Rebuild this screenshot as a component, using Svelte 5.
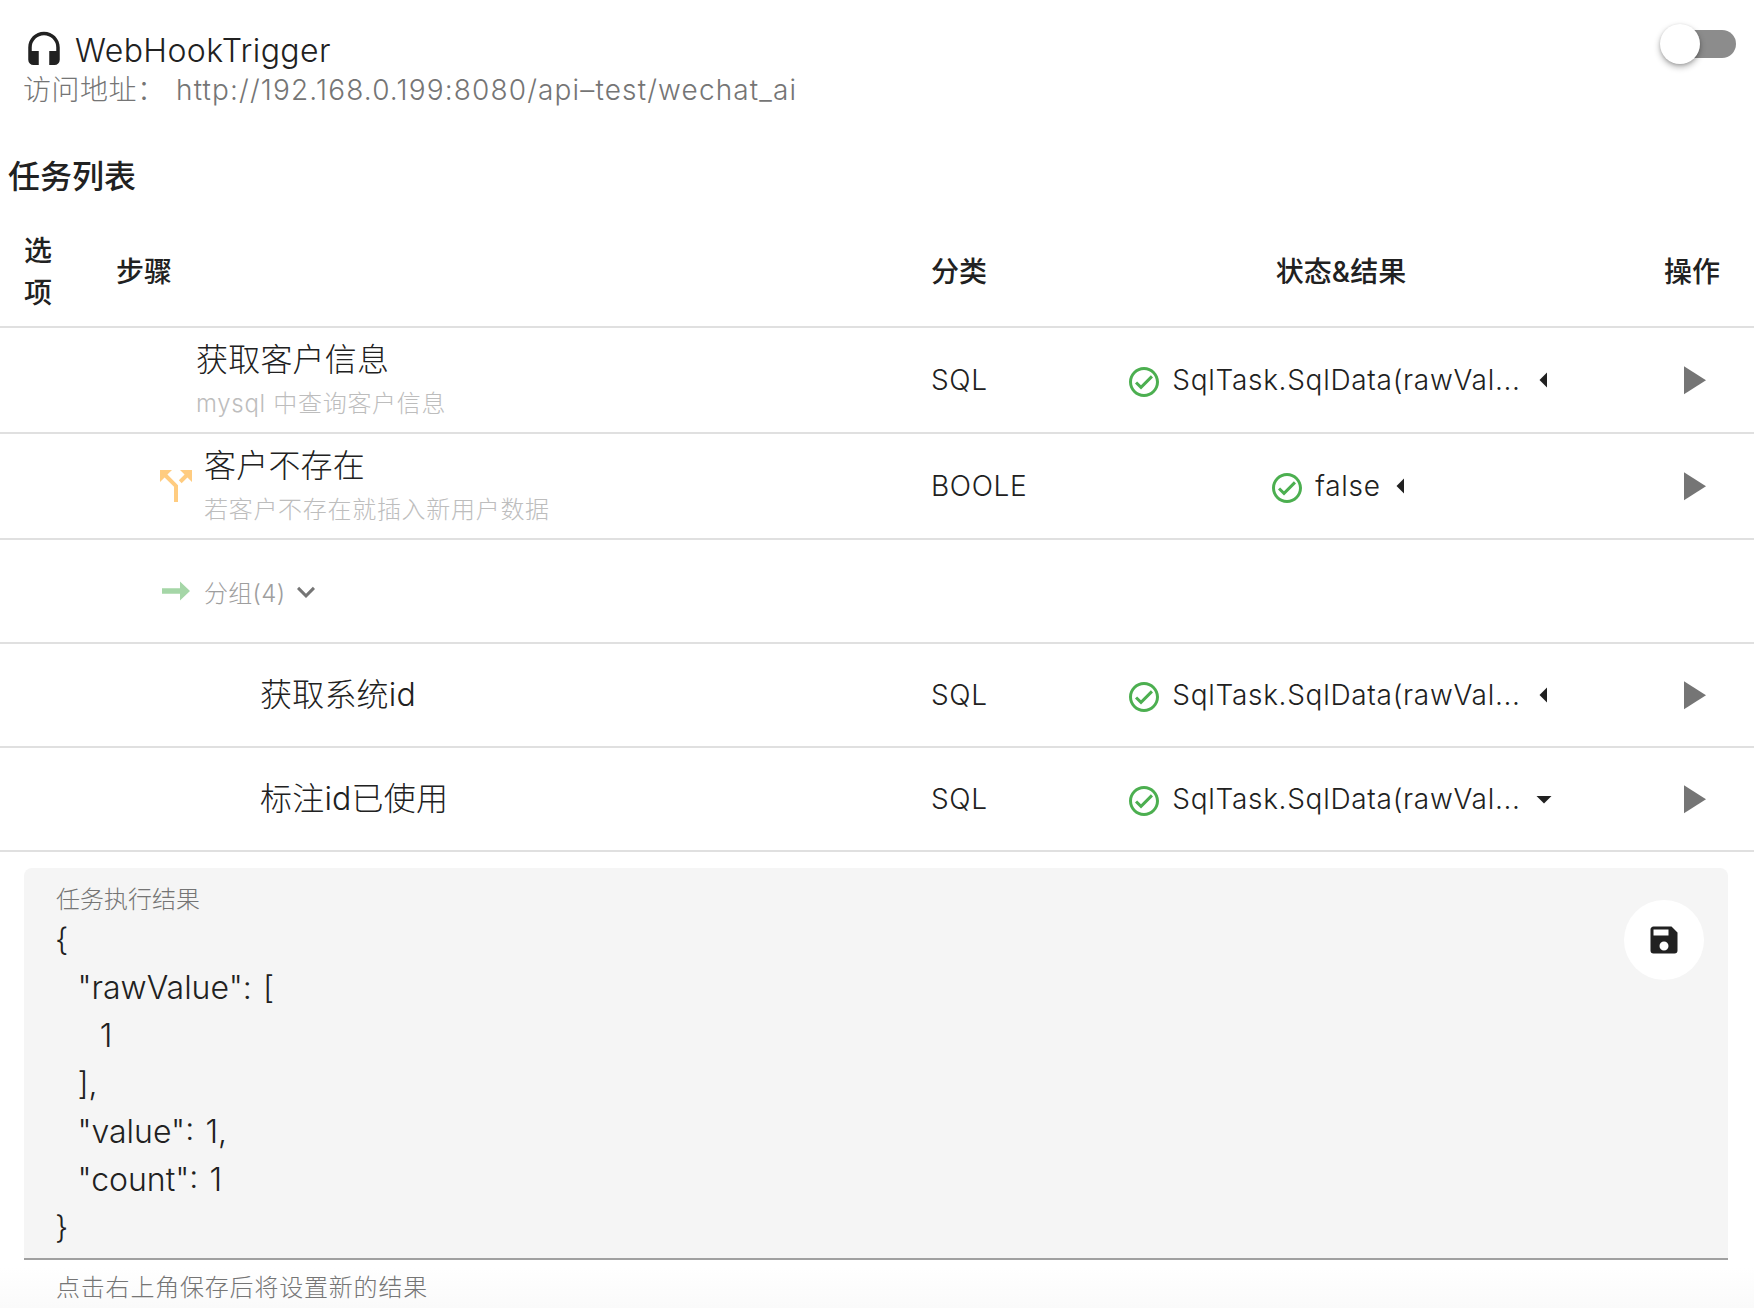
<script>
	const icons = {
		headphones: 'M12,1C7,1 3,5 3,10V17A3,3 0 0,0 6,20H9V12H5V10A7,7 0 0,1 12,3A7,7 0 0,1 19,10V12H15V20H18A3,3 0 0,0 21,17V10C21,5 17,1 12,1Z',
		split: 'M14,4L16.29,6.29L13.41,9.17L14.83,10.59L17.71,7.71L20,10V4M10,4H4V10L6.29,7.71L11,12.41V20H13V11.59L7.71,6.29',
		arrow: 'M1.5,10H15V4.9L22.5,12L15,19.1V14H1.5Z',
		check: 'M12 2C6.5 2 2 6.5 2 12S6.5 22 12 22 22 17.5 22 12 17.5 2 12 2M12 20C7.59 20 4 16.41 4 12S7.59 4 12 4 20 7.59 20 12 16.41 20 12 20M16.59 7.58L10 14.17L7.41 11.59L6 13L10 17L18 9L16.59 7.58Z',
		left: 'M14,7L9,12L14,17V7Z',
		down: 'M7,10L12,15L17,10H7Z',
		chevron: 'M7.41,8.58L12,13.17L16.59,8.58L18,10L12,16L6,10L7.41,8.58Z',
		play: 'M8,5.14V19.14L19,12.14L8,5.14Z',
		save: 'M15,9H5V5H15M12,19A3,3 0 0,1 9,16A3,3 0 0,1 12,13A3,3 0 0,1 15,16A3,3 0 0,1 12,19M17,3H5C3.89,3 3,3.9 3,5V19A2,2 0 0,0 5,21H19A2,2 0 0,0 21,19V7L17,3Z'
	};

	const sqlResult = 'SqlTask.SqlData(rawVal...';

	const rows = [
		{ kind: 'task', cls: 'top', name: '获取客户信息', desc: 'mysql 中查询客户信息', type: 'SQL', result: sqlResult, caret: 'left' },
		{ kind: 'task', cls: 'branch', icon: 'split', name: '客户不存在', desc: '若客户不存在就插入新用户数据', type: 'BOOLE', result: 'false', caret: 'left' },
		{ kind: 'group', name: '分组(4)' },
		{ kind: 'task', cls: 'child', name: '获取系统id', type: 'SQL', result: sqlResult, caret: 'left' },
		{ kind: 'task', cls: 'child', name: '标注id已使用', type: 'SQL', result: sqlResult, caret: 'down' }
	];

	const resultJson = `{
  "rawValue": [
    1
  ],
  "value": 1,
  "count": 1
}`;
</script>

{#snippet icon(name, cls)}
	<svg class={cls} viewBox="0 0 24 24"><path d={icons[name]} /></svg>
{/snippet}

<main>
	<header class="trigger">
		<div class="trigger-text">
			<div class="title">{@render icon('headphones', 'ic-head')}<span>WebHookTrigger</span></div>
			<div class="addr"><span class="addr-label">访问地址：</span><span class="url">http://192.168.0.199:8080/api–test/wechat_ai</span></div>
		</div>
		<div class="switch"><span class="thumb"></span></div>
	</header>

	<h2>任务列表</h2>

	<table>
		<colgroup>
			<col class="c1" /><col class="c2" /><col class="c3" /><col class="c4" /><col class="c5" />
		</colgroup>
		<thead>
			<tr>
				<th class="opt">选项</th>
				<th>步骤</th>
				<th>分类</th>
				<th class="center">状态&amp;结果</th>
				<th>操作</th>
			</tr>
		</thead>
		<tbody>
			{#each rows as row}
				{#if row.kind === 'group'}
					<tr class="row-group">
						<td></td>
						<td colspan="4">
							<div class="step branch">
								{@render icon('arrow', 'ic-arrow')}
								<span class="group-name">{row.name}</span>
								{@render icon('chevron', 'ic-chevron')}
							</div>
						</td>
					</tr>
				{:else}
					<tr class={row.desc ? 'row-tall' : 'row-short'}>
						<td></td>
						<td>
							<div class="step {row.cls}">
								{#if row.icon}{@render icon(row.icon, 'ic-split')}{/if}
								<div>
									<div class="name">{row.name}</div>
									{#if row.desc}<div class="desc">{row.desc}</div>{/if}
								</div>
							</div>
						</td>
						<td class="type">{row.type}</td>
						<td>
							<div class="status">
								{@render icon('check', 'ic-check')}
								<span class="result" class:long={row.result === sqlResult}>{row.result}</span>
								{@render icon(row.caret, 'ic-caret')}
							</div>
						</td>
						<td class="op">{@render icon('play', 'ic-play')}</td>
					</tr>
				{/if}
			{/each}
		</tbody>
	</table>

	<section class="panel">
		<div class="field">
			<div class="field-label">任务执行结果</div>
			<pre>{resultJson}</pre>
			<button class="save" aria-label="保存">{@render icon('save', 'ic-save')}</button>
		</div>
		<div class="hint">点击右上角保存后将设置新的结果</div>
	</section>
</main>

<style>
	:global(body) {
		margin: 0;
		background: #fff;
	}

	main {
		height: 1308px;
		overflow: hidden;
		font-family: Inter, "Noto Sans CJK SC", sans-serif;
		color: #212121;
		background: linear-gradient(to bottom, #fff 1268px, #fafafa 1308px);
	}

	svg {
		display: block;
		flex: none;
		fill: currentColor;
	}

	.trigger {
		display: flex;
		justify-content: space-between;
		padding: 30px 18px 0 23px;
	}

	.title {
		display: flex;
		align-items: center;
		height: 40px;
		font-size: 32px;
		font-weight: 300;
		letter-spacing: 0.4px;
	}

	.ic-head {
		width: 42px;
		height: 42px;
		margin: 2px 10px 0 0;
		color: #212121;
	}

	.addr {
		display: flex;
		height: 40px;
		line-height: 40px;
		font-size: 28px;
		font-weight: 300;
		color: #757575;
	}

	.addr-label {
		width: 153px;
		letter-spacing: 0.5px;
	}

	.url {
		letter-spacing: 1.15px;
	}

	.switch {
		position: relative;
		width: 72px;
		height: 28px;
		border-radius: 14px;
		background: #8c8c8c;
	}

	.thumb {
		position: absolute;
		left: -4px;
		top: -6px;
		width: 40px;
		height: 40px;
		border-radius: 50%;
		background: #fff;
		box-shadow: 0 3px 6px rgba(0, 0, 0, 0.3), 0 1px 3px rgba(0, 0, 0, 0.15);
	}

	h2 {
		margin: 43px 0 14px 8px;
		font-size: 32px;
		line-height: 48px;
		font-weight: 500;
	}

	table {
		width: 100%;
		table-layout: fixed;
		border-collapse: collapse;
	}

	.c1 { width: 93px; }
	.c3 { width: 133px; }
	.c4 { width: 600px; }
	.c5 { width: 113px; }

	th {
		height: 112px;
		padding: 2px 24px 0 23px;
		box-sizing: border-box;
		font-size: 28px;
		line-height: 42px;
		font-weight: 500;
		text-align: left;
		border-bottom: 2px solid #e0e0e0;
	}

	th.opt {
		padding: 2px 41px 0 24px;
	}

	th.center {
		padding: 2px 24px 0;
		text-align: center;
	}

	td {
		padding: 0 24px;
		border-bottom: 2px solid #e0e0e0;
	}

	.row-tall td { height: 104px; }
	.row-short td, .row-group td { height: 102px; }

	.step {
		display: flex;
		align-items: center;
	}

	.step.top { margin-left: 79px; }
	.step.branch { margin-left: 43px; }
	.step.child { margin-left: 143px; }

	.ic-split {
		width: 48px;
		height: 48px;
		margin: 0 4px 0 -8px;
		color: #ffcc80;
	}

	.ic-arrow {
		width: 32px;
		height: 32px;
		margin: 0 12px 0 0;
		color: #a5d6a7;
	}

	.name {
		font-size: 32px;
		line-height: 48px;
		font-weight: 300;
		letter-spacing: 0.2px;
	}

	.row-tall .name {
		padding-top: 1px;
		line-height: 47px;
	}

	.desc {
		font-size: 24px;
		line-height: 42px;
		font-weight: 300;
		letter-spacing: 0.7px;
		color: #bdbdbd;
	}

	.group-name {
		font-size: 24px;
		font-weight: 300;
		letter-spacing: 0.3px;
		color: #9e9e9e;
	}

	.ic-chevron {
		width: 36px;
		height: 36px;
		margin: 1px 0 0 3px;
		color: #757575;
	}

	.type {
		padding-left: 23px;
		font-size: 28px;
		font-weight: 300;
		letter-spacing: 0.6px;
	}

	.status {
		display: flex;
		align-items: center;
		justify-content: center;
		padding-left: 6px;
		font-size: 28px;
		font-weight: 300;
		letter-spacing: 0.7px;
	}

	.result.long {
		margin-right: 3px;
	}

	.ic-check {
		width: 36px;
		height: 36px;
		margin: 3px 10px 0 0;
		color: #4caf50;
	}

	.ic-caret {
		width: 36px;
		height: 36px;
		margin-left: 2px;
		color: #212121;
	}

	.op {
		padding-left: 27px;
		padding-right: 0;
	}

	.ic-play {
		width: 48px;
		height: 48px;
		color: #757575;
	}

	.panel {
		margin: 16px 26px 0 24px;
	}

	.field {
		position: relative;
		box-sizing: border-box;
		height: 392px;
		padding: 15px 32px 0;
		background: #f5f5f5;
		border-radius: 8px 8px 0 0;
		border-bottom: 2px solid #a0a0a0;
	}

	.field-label {
		font-size: 24px;
		line-height: 34px;
		font-weight: 300;
		color: #757575;
	}

	pre {
		margin: -1px 0 0 -1px;
		font-family: inherit;
		font-size: 32px;
		line-height: 48px;
		font-weight: 300;
		word-spacing: 2.2px;
	}

	.save {
		position: absolute;
		top: 32px;
		right: 24px;
		display: flex;
		align-items: center;
		justify-content: center;
		width: 80px;
		height: 80px;
		padding: 0;
		border: 0;
		border-radius: 50%;
		background: #fff;
		color: #212121;
	}

	.ic-save {
		width: 36px;
		height: 36px;
	}

	.hint {
		padding: 11px 32px 0;
		font-size: 24px;
		line-height: 34px;
		font-weight: 300;
		letter-spacing: 0.8px;
		color: #757575;
	}
</style>
